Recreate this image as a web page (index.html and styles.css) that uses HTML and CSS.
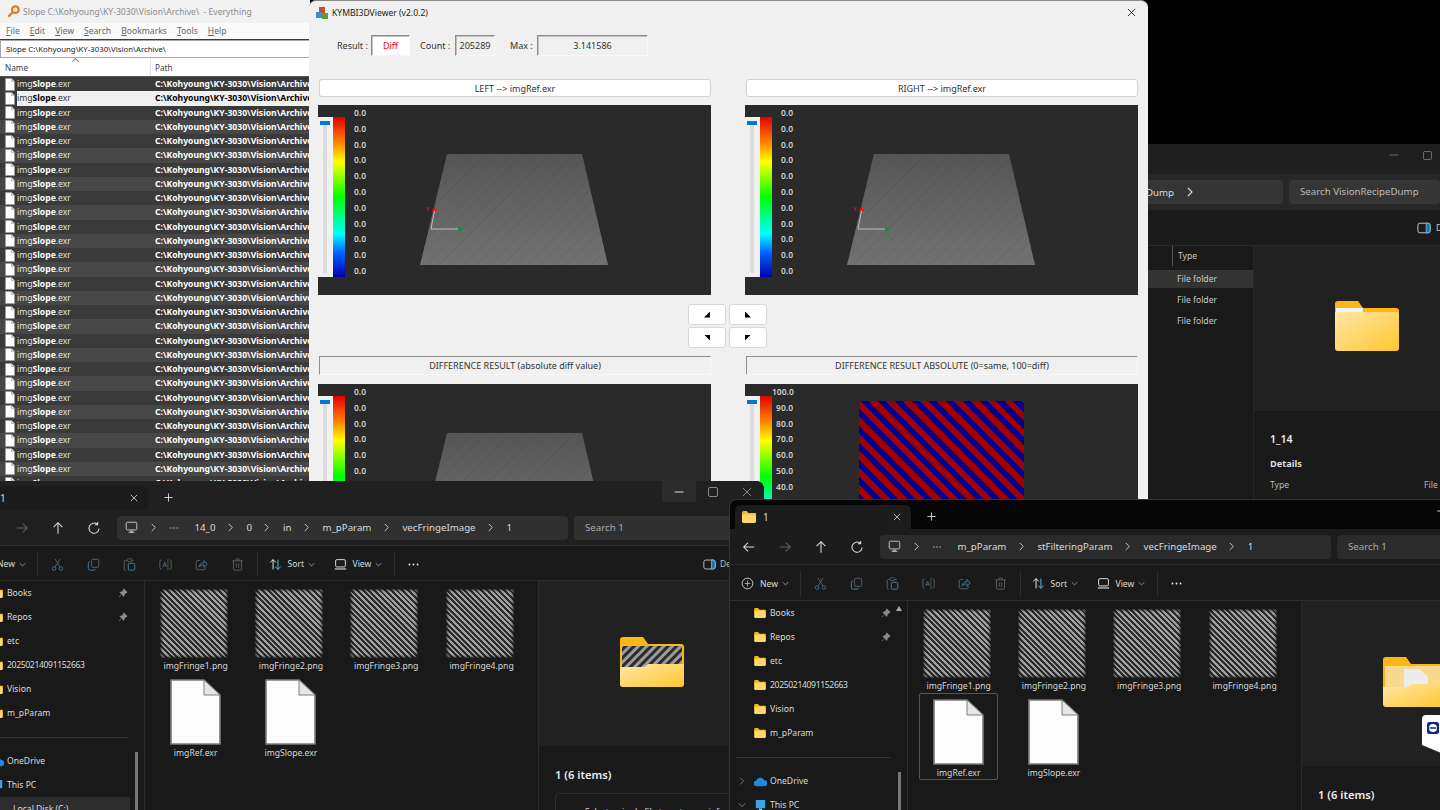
FILE: index.html
```html
<!DOCTYPE html>
<html lang="en">
<head>
    <meta charset="UTF-8">
    <meta name="viewport" content="width=device-width, initial-scale=1.0">
    <title>Desktop</title>
    <link rel="stylesheet" href="styles.css">
</head>
<body>
    <!-- shared icons -->
    <svg class="defs" aria-hidden="true">
        <defs>
            <linearGradient id="folderFront" x1="0" y1="0" x2="1" y2="1">
                <stop offset="0" stop-color="#ffe7a6"/>
                <stop offset="1" stop-color="#ffc62e"/>
            </linearGradient>
            <linearGradient id="planeFill" x1="0" y1="0" x2="0" y2="1">
                <stop offset="0" stop-color="#565656"/>
                <stop offset="1" stop-color="#727272"/>
            </linearGradient>
            <pattern id="fringe" width="6" height="6" patternUnits="userSpaceOnUse" patternTransform="rotate(45)">
                <rect width="6" height="6" fill="#2c2c2c"/>
                <rect width="3" height="6" fill="#9c9c9c"/>
            </pattern>
            <pattern id="planeLines" width="9" height="9" patternUnits="userSpaceOnUse" patternTransform="rotate(45)">
                <rect width="1" height="9" fill="#000" fill-opacity=".06"/>
            </pattern>
            <symbol id="i-back" viewBox="0 0 16 16"><path d="M14 8H2.5M7 3 2 8l5 5" fill="none" stroke="currentColor" stroke-width="1.2"/></symbol>
            <symbol id="i-forward" viewBox="0 0 16 16"><path d="M2 8h11.5M9 3l5 5-5 5" fill="none" stroke="currentColor" stroke-width="1.2"/></symbol>
            <symbol id="i-up" viewBox="0 0 16 16"><path d="M8 14.5V2.5M3 7l5-5 5 5" fill="none" stroke="currentColor" stroke-width="1.2"/></symbol>
            <symbol id="i-refresh" viewBox="0 0 16 16"><path d="M13.8 8.5a5.8 5.8 0 1 1-1.9-4.6M12.2 1v3.2H9" fill="none" stroke="currentColor" stroke-width="1.2"/></symbol>
            <symbol id="i-pc" viewBox="0 0 16 16"><rect x="1.5" y="1.5" width="13" height="9.5" rx="1.5" fill="none" stroke="currentColor" stroke-width="1.2"/><path d="M4.5 14h7M6 12.6h4" fill="none" stroke="currentColor" stroke-width="1.2"/></symbol>
            <symbol id="i-chev" viewBox="0 0 10 10"><path d="M3 1l4 4-4 4" fill="none" stroke="currentColor" stroke-width="1.1"/></symbol>
            <symbol id="i-chevdown" viewBox="0 0 10 10"><path d="M1 3l4 4 4-4" fill="none" stroke="currentColor" stroke-width="1.1"/></symbol>
            <symbol id="i-more" viewBox="0 0 16 16"><circle cx="3" cy="8" r="1.1" fill="currentColor"/><circle cx="8" cy="8" r="1.1" fill="currentColor"/><circle cx="13" cy="8" r="1.1" fill="currentColor"/></symbol>
            <symbol id="i-close" viewBox="0 0 10 10"><path d="M1 1l8 8M9 1L1 9" fill="none" stroke="currentColor" stroke-width="1"/></symbol>
            <symbol id="i-plus" viewBox="0 0 10 10"><path d="M5 .5v9M.5 5h9" fill="none" stroke="currentColor" stroke-width="1"/></symbol>
            <symbol id="i-min" viewBox="0 0 10 10"><path d="M.5 5h9" fill="none" stroke="currentColor" stroke-width="1"/></symbol>
            <symbol id="i-max" viewBox="0 0 10 10"><rect x=".5" y=".5" width="9" height="9" rx="1.5" fill="none" stroke="currentColor"/></symbol>
            <symbol id="i-new" viewBox="0 0 16 16"><circle cx="8" cy="8" r="6.6" fill="none" stroke="currentColor" stroke-width="1.1"/><path d="M8 4.5v7M4.5 8h7" stroke="#60c8f0" stroke-width="1.1"/></symbol>
            <symbol id="i-cut" viewBox="0 0 16 16"><circle cx="3.8" cy="13" r="2.2" fill="none" stroke="#3f7f9f"/><circle cx="12.2" cy="13" r="2.2" fill="none" stroke="#3f7f9f"/><path d="M5 11 11.2 1M11 11 4.8 1" fill="none" stroke="#6a6a6a"/></symbol>
            <symbol id="i-copy" viewBox="0 0 16 16"><rect x="5.5" y="1.5" width="9" height="10" rx="2" fill="none" stroke="#5d5d5d" stroke-width="1.2"/><path d="M3.8 4.6A2.4 2.4 0 0 0 1.6 7v5.6a2.4 2.4 0 0 0 2.4 2.4h4.4a2.4 2.4 0 0 0 2.2-1.6" fill="none" stroke="#3f7f9f" stroke-width="1.2"/></symbol>
            <symbol id="i-paste" viewBox="0 0 16 16"><path d="M5 3H3a1.5 1.5 0 0 0-1.5 1.5v9A1.5 1.5 0 0 0 3 15h1M11 3h2" fill="none" stroke="#5d5d5d" stroke-width="1.2"/><rect x="5" y="1" width="6" height="3.4" rx="1" fill="none" stroke="#5d5d5d"/><rect x="6.5" y="6.5" width="8" height="8.5" rx="1.5" fill="none" stroke="#3f7f9f" stroke-width="1.2"/></symbol>
            <symbol id="i-rename" viewBox="0 0 16 16"><path d="M3 2.5H2.5A1.5 1.5 0 0 0 1 4v8a1.5 1.5 0 0 0 1.5 1.5H3M13 2.5h.5A1.5 1.5 0 0 1 15 4v8a1.5 1.5 0 0 1-1.5 1.5H13" fill="none" stroke="#5d5d5d" stroke-width="1.2"/><path d="M11 .8v14.4" stroke="#5d5d5d"/><text x="7" y="11" font-size="8.5" text-anchor="middle" fill="#3f7f9f">A</text></symbol>
            <symbol id="i-share" viewBox="0 0 16 16"><path d="M6 3H3.5A2 2 0 0 0 1.5 5v7.5a2 2 0 0 0 2 2h7a2 2 0 0 0 2-2V11" fill="none" stroke="#5d5d5d" stroke-width="1.2"/><path d="M5 11c.4-3.4 2.6-5 6-5V3l4 4.4-4 4V8.6c-2.6 0-4.6.6-6 2.4z" fill="none" stroke="#3f7f9f" stroke-width="1.1"/></symbol>
            <symbol id="i-delete" viewBox="0 0 16 16"><path d="M1.5 3.5h13M6 3.5V2a1 1 0 0 1 1-1h2a1 1 0 0 1 1 1v1.5M3 3.5v10a1.5 1.5 0 0 0 1.5 1.5h7a1.5 1.5 0 0 0 1.5-1.5v-10M6.5 6.5v5.5M9.5 6.5v5.5" fill="none" stroke="#5d5d5d" stroke-width="1.2"/></symbol>
            <symbol id="i-sort" viewBox="0 0 16 16"><path d="M5 14V2M1.5 5.5 5 2l3.5 3.5" fill="none" stroke="#e8e8e8" stroke-width="1.2"/><path d="M11 2v12M7.5 10.5 11 14l3.5-3.5" fill="none" stroke="#60b8e8" stroke-width="1.2"/></symbol>
            <symbol id="i-view" viewBox="0 0 16 16"><rect x="2" y="2" width="12" height="9" rx="1.5" fill="none" stroke="currentColor" stroke-width="1.2"/><path d="M1 13.5h14" stroke="currentColor" stroke-width="1.4"/></symbol>
            <symbol id="i-pane" viewBox="0 0 16 16"><rect x="1" y="2.5" width="14" height="11" rx="2.5" fill="none" stroke="#c8c8c8" stroke-width="1.1"/><path d="M10.5 2.5h2a2.5 2.5 0 0 1 2.5 2.5v6a2.5 2.5 0 0 1-2.5 2.5h-2z" fill="#2b6f96" stroke="#60c8f0" stroke-width="1"/></symbol>
            <symbol id="i-pin" viewBox="0 0 12 12"><path d="M7 1l4 4-1.4.6-2.2 2.6-.3 2L2 5.2l2-.4 2.4-2.2zM4 8l-3 3" fill="#8c8c8c" stroke="#8c8c8c" stroke-width=".8"/></symbol>
            <symbol id="i-folder" viewBox="0 0 14 12"><path d="M0 1.5A1.5 1.5 0 0 1 1.5 0h3.2L6.4 2H14v2H0z" fill="#f5b81f"/><path d="M0 3.4h12.6A1.4 1.4 0 0 1 14 4.8v5.8a1.4 1.4 0 0 1-1.4 1.4H1.4A1.4 1.4 0 0 1 0 10.6z" fill="#ffd867"/></symbol>
            <symbol id="i-cloud" viewBox="0 0 14 10"><path d="M3 10A3 3 0 0 1 2.6 4 4.4 4.4 0 0 1 10.8 3.4 3.3 3.3 0 0 1 11 10z" fill="#1f8be0"/></symbol>
            <symbol id="i-screen" viewBox="0 0 14 14"><rect x="1" y="0" width="12" height="10.5" rx="1" fill="#3aa4e0"/><rect x="5" y="11" width="4" height="2.4" fill="#9ad4f0"/></symbol>
            <symbol id="i-file" viewBox="0 0 10 13"><path d="M.5.5h6l3 3v9H.5z" fill="#fff" stroke="#9a9a9a" stroke-width=".6"/><path d="M6.5.5v3h3" fill="#ddd" stroke="#9a9a9a" stroke-width=".6"/></symbol>
            <symbol id="i-doc" viewBox="0 0 51 66"><path d="M1 1h33l16 15v49H1z" fill="#fdfdfd" stroke="#7c7c7c" stroke-width="1.6"/><path d="M34 1v15h16z" fill="#e6e6e6" stroke="#7c7c7c" stroke-width="1"/></symbol>
            <symbol id="i-folderclosed" viewBox="0 0 64 50"><path d="M0 3a3 3 0 0 1 3-3h20l5 7h33a3 3 0 0 1 3 3v8H0z" fill="#fcb715"/><rect x="1" y="7" width="27" height="4" fill="#f2f2f2"/><path d="M0 11h61a3 3 0 0 1 3 3v33a3 3 0 0 1-3 3H3a3 3 0 0 1-3-3z" fill="url(#folderFront)"/></symbol>
            <symbol id="i-folderstripes" viewBox="0 0 64 50"><path d="M0 3a3 3 0 0 1 3-3h20l5 7h33a3 3 0 0 1 3 3v37H0z" fill="#fcb715"/><rect x="2" y="9" width="60" height="24" fill="url(#fringe)"/><path d="M0 30h24l4-3h36v20a3 3 0 0 1-3 3H3a3 3 0 0 1-3-3z" fill="url(#folderFront)"/></symbol>
            <symbol id="i-folderpaper" viewBox="0 0 64 50"><path d="M0 3a3 3 0 0 1 3-3h20l5 7h33a3 3 0 0 1 3 3v37H0z" fill="#fcb715"/><rect x="2" y="9" width="60" height="24" fill="#f8d98f"/><path d="M21 12h15l9 8v14H21z" fill="#ececec"/><path d="M0 30h24l4-3h36v20a3 3 0 0 1-3 3H3a3 3 0 0 1-3-3z" fill="url(#folderFront)"/></symbol>
            <symbol id="i-scene" viewBox="0 0 393 190">
                <polygon points="129,49 264,49 290,160 102,160" fill="url(#planeFill)"/>
                <polygon points="129,49 264,49 290,160 102,160" fill="url(#planeLines)"/>
                <path d="M117 103 113 124H142" fill="none" stroke="#bdbdbd" stroke-width="1"/>
                <path d="M114 106 119 106 117 101z" fill="#ff1010"/>
                <path d="M140 121.5 146 124 140 126.5z" fill="#109040"/>
                <text x="108" y="106" font-size="6" fill="#ff1010">Y</text>
                <text x="141" y="132" font-size="6" fill="#109040">X</text>
            </symbol>
        </defs>
    </svg>

    <!-- Everything search window -->
    <div class="everything">
        <div class="ev-title">
            <svg class="ev-logo" viewBox="0 0 14 14"><circle cx="9" cy="5" r="3.6" fill="none" stroke="#f0780a" stroke-width="2.4"/><path d="M6.4 7.6 1.5 12.5" stroke="#f0780a" stroke-width="2.4"/></svg>
            <span>Slope C:\Kohyoung\KY-3030\Vision\Archive\&nbsp; - Everything</span>
        </div>
        <div class="ev-menu">
            <span><u>F</u>ile</span><span><u>E</u>dit</span><span><u>V</u>iew</span><span><u>S</u>earch</span><span><u>B</u>ookmarks</span><span><u>T</u>ools</span><span><u>H</u>elp</span>
        </div>
        <div class="ev-search">Slope C:\Kohyoung\KY-3030\Vision\Archive\</div>
        <div class="ev-head">
            <span class="ev-col-name">Name<i class="ev-caret"></i></span>
            <span class="ev-col-path">Path</span>
        </div>
        <div class="ev-rows">
            <div class="ev-row"><svg><use href="#i-file"/></svg><span class="nm">img<b>Slope</b>.exr</span><b class="pt">C:\Kohyoung\KY-3030\Vision\Archive\</b></div>
            <div class="ev-row selected"><svg><use href="#i-file"/></svg><span class="nm">img<b>Slope</b>.exr</span><b class="pt">C:\Kohyoung\KY-3030\Vision\Archive\</b></div>
            <div class="ev-row"><svg><use href="#i-file"/></svg><span class="nm">img<b>Slope</b>.exr</span><b class="pt">C:\Kohyoung\KY-3030\Vision\Archive\</b></div>
            <div class="ev-row"><svg><use href="#i-file"/></svg><span class="nm">img<b>Slope</b>.exr</span><b class="pt">C:\Kohyoung\KY-3030\Vision\Archive\</b></div>
            <div class="ev-row"><svg><use href="#i-file"/></svg><span class="nm">img<b>Slope</b>.exr</span><b class="pt">C:\Kohyoung\KY-3030\Vision\Archive\</b></div>
            <div class="ev-row"><svg><use href="#i-file"/></svg><span class="nm">img<b>Slope</b>.exr</span><b class="pt">C:\Kohyoung\KY-3030\Vision\Archive\</b></div>
            <div class="ev-row"><svg><use href="#i-file"/></svg><span class="nm">img<b>Slope</b>.exr</span><b class="pt">C:\Kohyoung\KY-3030\Vision\Archive\</b></div>
            <div class="ev-row"><svg><use href="#i-file"/></svg><span class="nm">img<b>Slope</b>.exr</span><b class="pt">C:\Kohyoung\KY-3030\Vision\Archive\</b></div>
            <div class="ev-row"><svg><use href="#i-file"/></svg><span class="nm">img<b>Slope</b>.exr</span><b class="pt">C:\Kohyoung\KY-3030\Vision\Archive\</b></div>
            <div class="ev-row"><svg><use href="#i-file"/></svg><span class="nm">img<b>Slope</b>.exr</span><b class="pt">C:\Kohyoung\KY-3030\Vision\Archive\</b></div>
            <div class="ev-row"><svg><use href="#i-file"/></svg><span class="nm">img<b>Slope</b>.exr</span><b class="pt">C:\Kohyoung\KY-3030\Vision\Archive\</b></div>
            <div class="ev-row"><svg><use href="#i-file"/></svg><span class="nm">img<b>Slope</b>.exr</span><b class="pt">C:\Kohyoung\KY-3030\Vision\Archive\</b></div>
            <div class="ev-row"><svg><use href="#i-file"/></svg><span class="nm">img<b>Slope</b>.exr</span><b class="pt">C:\Kohyoung\KY-3030\Vision\Archive\</b></div>
            <div class="ev-row"><svg><use href="#i-file"/></svg><span class="nm">img<b>Slope</b>.exr</span><b class="pt">C:\Kohyoung\KY-3030\Vision\Archive\</b></div>
            <div class="ev-row"><svg><use href="#i-file"/></svg><span class="nm">img<b>Slope</b>.exr</span><b class="pt">C:\Kohyoung\KY-3030\Vision\Archive\</b></div>
            <div class="ev-row"><svg><use href="#i-file"/></svg><span class="nm">img<b>Slope</b>.exr</span><b class="pt">C:\Kohyoung\KY-3030\Vision\Archive\</b></div>
            <div class="ev-row"><svg><use href="#i-file"/></svg><span class="nm">img<b>Slope</b>.exr</span><b class="pt">C:\Kohyoung\KY-3030\Vision\Archive\</b></div>
            <div class="ev-row"><svg><use href="#i-file"/></svg><span class="nm">img<b>Slope</b>.exr</span><b class="pt">C:\Kohyoung\KY-3030\Vision\Archive\</b></div>
            <div class="ev-row"><svg><use href="#i-file"/></svg><span class="nm">img<b>Slope</b>.exr</span><b class="pt">C:\Kohyoung\KY-3030\Vision\Archive\</b></div>
            <div class="ev-row"><svg><use href="#i-file"/></svg><span class="nm">img<b>Slope</b>.exr</span><b class="pt">C:\Kohyoung\KY-3030\Vision\Archive\</b></div>
            <div class="ev-row"><svg><use href="#i-file"/></svg><span class="nm">img<b>Slope</b>.exr</span><b class="pt">C:\Kohyoung\KY-3030\Vision\Archive\</b></div>
            <div class="ev-row"><svg><use href="#i-file"/></svg><span class="nm">img<b>Slope</b>.exr</span><b class="pt">C:\Kohyoung\KY-3030\Vision\Archive\</b></div>
            <div class="ev-row"><svg><use href="#i-file"/></svg><span class="nm">img<b>Slope</b>.exr</span><b class="pt">C:\Kohyoung\KY-3030\Vision\Archive\</b></div>
            <div class="ev-row"><svg><use href="#i-file"/></svg><span class="nm">img<b>Slope</b>.exr</span><b class="pt">C:\Kohyoung\KY-3030\Vision\Archive\</b></div>
            <div class="ev-row"><svg><use href="#i-file"/></svg><span class="nm">img<b>Slope</b>.exr</span><b class="pt">C:\Kohyoung\KY-3030\Vision\Archive\</b></div>
            <div class="ev-row"><svg><use href="#i-file"/></svg><span class="nm">img<b>Slope</b>.exr</span><b class="pt">C:\Kohyoung\KY-3030\Vision\Archive\</b></div>
            <div class="ev-row"><svg><use href="#i-file"/></svg><span class="nm">img<b>Slope</b>.exr</span><b class="pt">C:\Kohyoung\KY-3030\Vision\Archive\</b></div>
            <div class="ev-row"><svg><use href="#i-file"/></svg><span class="nm">img<b>Slope</b>.exr</span><b class="pt">C:\Kohyoung\KY-3030\Vision\Archive\</b></div>
            <div class="ev-row"><svg><use href="#i-file"/></svg><span class="nm">img<b>Slope</b>.exr</span><b class="pt">C:\Kohyoung\KY-3030\Vision\Archive\</b></div>
        </div>
    </div>

    <!-- explorer behind the viewer -->
    <div class="back-explorer">
        <div class="be-top">
            <svg class="be-min"><use href="#i-min"/></svg>
            <svg class="be-max"><use href="#i-max"/></svg>
        </div>
        <div class="be-address">
            <div class="be-crumb"><span>Dump</span><svg><use href="#i-chev"/></svg></div>
            <div class="be-search">Search VisionRecipeDump</div>
        </div>
        <div class="be-tools"><svg><use href="#i-pane"/></svg><span>Details</span></div>
        <div class="be-body">
            <div class="be-list">
                <div class="be-type"><span>Type</span></div>
                <div class="be-item active">File folder</div>
                <div class="be-item">File folder</div>
                <div class="be-item">File folder</div>
            </div>
            <div class="be-side">
                <div class="be-preview"><svg><use href="#i-folderclosed"/></svg></div>
                <div class="be-details">
                    <div class="be-name">1_14</div>
                    <div class="be-label">Details</div>
                    <div class="be-prop"><span>Type</span><span>File folder</span></div>
                </div>
            </div>
        </div>
    </div>

    <!-- 3D viewer -->
    <div class="viewer">
        <div class="vw-title">
            <svg class="vw-logo" viewBox="0 0 12 12"><rect x="3" y="0" width="6" height="6" fill="#d04a3a"/><rect x="0" y="5" width="6" height="6" fill="#3f8fb8"/><rect x="6" y="6" width="6" height="6" fill="#5a9a4a"/></svg>
            <span>KYMBI3DViewer (v2.0.2)</span>
            <svg class="vw-close"><use href="#i-close"/></svg>
        </div>
        <div class="vw-stats">
            <span class="st-label st-result">Result :</span><span class="st-box st-diff">Diff</span>
            <span class="st-label st-count">Count :</span><span class="st-box st-num">205289</span>
            <span class="st-label st-max">Max :</span><span class="st-box st-wide">3.141586</span>
        </div>
        <div class="vw-panels">
            <div class="panel">
                <div class="caption button">LEFT --&gt; imgRef.exr</div>
                <div class="view">
                    <div class="slider"><i></i></div><div class="colorbar"></div>
                    <div class="scale"><span>0.0</span><span>0.0</span><span>0.0</span><span>0.0</span><span>0.0</span><span>0.0</span><span>0.0</span><span>0.0</span><span>0.0</span><span>0.0</span><span>0.0</span></div>
                    <svg class="scene"><use href="#i-scene"/></svg>
                </div>
            </div>
            <div class="panel">
                <div class="caption button">RIGHT --&gt; imgRef.exr</div>
                <div class="view">
                    <div class="slider"><i></i></div><div class="colorbar"></div>
                    <div class="scale"><span>0.0</span><span>0.0</span><span>0.0</span><span>0.0</span><span>0.0</span><span>0.0</span><span>0.0</span><span>0.0</span><span>0.0</span><span>0.0</span><span>0.0</span></div>
                    <svg class="scene"><use href="#i-scene"/></svg>
                </div>
            </div>
        </div>
        <div class="vw-arrows">
            <button class="arrow"><i class="tri tri-a"></i></button>
            <button class="arrow"><i class="tri tri-b"></i></button>
            <button class="arrow"><i class="tri tri-c"></i></button>
            <button class="arrow"><i class="tri tri-d"></i></button>
        </div>
        <div class="vw-panels">
            <div class="panel">
                <div class="caption sunken">DIFFERENCE RESULT (absolute diff value)</div>
                <div class="view">
                    <div class="slider"><i></i></div><div class="colorbar"></div>
                    <div class="scale"><span>0.0</span><span>0.0</span><span>0.0</span><span>0.0</span><span>0.0</span><span>0.0</span><span>0.0</span><span>0.0</span><span>0.0</span><span>0.0</span><span>0.0</span></div>
                    <svg class="scene"><use href="#i-scene"/></svg>
                </div>
            </div>
            <div class="panel">
                <div class="caption sunken">DIFFERENCE RESULT ABSOLUTE (0=same, 100=diff)</div>
                <div class="view">
                    <div class="slider"><i></i></div><div class="colorbar"></div>
                    <div class="scale"><span>100.0</span><span>90.0</span><span>80.0</span><span>70.0</span><span>60.0</span><span>50.0</span><span>40.0</span><span>30.0</span><span>20.0</span><span>10.0</span><span>0.0</span></div>
                    <div class="diff-map"></div>
                </div>
            </div>
        </div>
    </div>

    <!-- explorer, lower left -->
    <div class="explorer win-left">
        <div class="ex-tabs">
            <div class="ex-tab"><svg class="ic-folder"><use href="#i-folder"/></svg><span>1</span><svg class="tab-x"><use href="#i-close"/></svg></div>
            <svg class="tab-plus"><use href="#i-plus"/></svg>
            <div class="ex-controls">
                <span class="ctl hover"><svg><use href="#i-min"/></svg></span>
                <span class="ctl"><svg><use href="#i-max"/></svg></span>
                <span class="ctl"><svg><use href="#i-close"/></svg></span>
            </div>
        </div>
        <div class="ex-address">
            <svg class="nav"><use href="#i-back"/></svg>
            <svg class="nav dim"><use href="#i-forward"/></svg>
            <svg class="nav"><use href="#i-up"/></svg>
            <svg class="nav"><use href="#i-refresh"/></svg>
            <div class="crumbs">
                <svg class="cr-pc"><use href="#i-pc"/></svg><svg class="cr-sep"><use href="#i-chev"/></svg>
                <svg class="cr-more"><use href="#i-more"/></svg>
                <span>14_0</span><svg class="cr-sep"><use href="#i-chev"/></svg>
                <span>0</span><svg class="cr-sep"><use href="#i-chev"/></svg>
                <span>in</span><svg class="cr-sep"><use href="#i-chev"/></svg>
                <span>m_pParam</span><svg class="cr-sep"><use href="#i-chev"/></svg>
                <span>vecFringeImage</span><svg class="cr-sep"><use href="#i-chev"/></svg>
                <span>1</span>
            </div>
            <div class="ex-search">Search 1</div>
        </div>
        <div class="ex-tools">
            <span class="tool tool-new"><svg><use href="#i-new"/></svg>New<svg class="caret"><use href="#i-chevdown"/></svg></span>
            <i class="tool-sep"></i>
            <svg class="tool-ic"><use href="#i-cut"/></svg>
            <svg class="tool-ic"><use href="#i-copy"/></svg>
            <svg class="tool-ic"><use href="#i-paste"/></svg>
            <svg class="tool-ic"><use href="#i-rename"/></svg>
            <svg class="tool-ic"><use href="#i-share"/></svg>
            <svg class="tool-ic"><use href="#i-delete"/></svg>
            <i class="tool-sep"></i>
            <span class="tool tool-sort"><svg><use href="#i-sort"/></svg>Sort<svg class="caret"><use href="#i-chevdown"/></svg></span>
            <span class="tool tool-view"><svg><use href="#i-view"/></svg>View<svg class="caret"><use href="#i-chevdown"/></svg></span>
            <i class="tool-sep"></i>
            <svg class="tool-more"><use href="#i-more"/></svg>
            <span class="tool tool-pane"><svg><use href="#i-pane"/></svg>Details</span>
        </div>
        <div class="ex-body">
            <div class="ex-nav">
                <div class="nv"><svg class="ic-folder"><use href="#i-folder"/></svg><span>Books</span><svg class="pin"><use href="#i-pin"/></svg></div>
                <div class="nv"><svg class="ic-folder"><use href="#i-folder"/></svg><span>Repos</span><svg class="pin"><use href="#i-pin"/></svg></div>
                <div class="nv"><svg class="ic-folder"><use href="#i-folder"/></svg><span>etc</span></div>
                <div class="nv"><svg class="ic-folder"><use href="#i-folder"/></svg><span class="nv-num">20250214091152663</span></div>
                <div class="nv"><svg class="ic-folder"><use href="#i-folder"/></svg><span>Vision</span></div>
                <div class="nv"><svg class="ic-folder"><use href="#i-folder"/></svg><span>m_pParam</span></div>
                <div class="nv-rule"></div>
                <div class="nv"><svg class="nv-chev"><use href="#i-chev"/></svg><svg class="ic-cloud"><use href="#i-cloud"/></svg><span>OneDrive</span></div>
                <div class="nv"><svg class="nv-chev"><use href="#i-chevdown"/></svg><svg class="ic-screen"><use href="#i-screen"/></svg><span>This PC</span></div>
                <div class="nv sub current"><span>Local Disk (C:)</span></div>
                <i class="nv-thumb"></i>
            </div>
            <div class="ex-files">
                <div class="file"><div class="thumb"></div><span>imgFringe1.png</span></div>
                <div class="file"><div class="thumb"></div><span>imgFringe2.png</span></div>
                <div class="file"><div class="thumb"></div><span>imgFringe3.png</span></div>
                <div class="file"><div class="thumb"></div><span>imgFringe4.png</span></div>
                <div class="file"><svg class="doc"><use href="#i-doc"/></svg><span>imgRef.exr</span></div>
                <div class="file"><svg class="doc"><use href="#i-doc"/></svg><span>imgSlope.exr</span></div>
            </div>
            <div class="ex-side">
                <div class="ex-preview"><svg><use href="#i-folderstripes"/></svg></div>
                <div class="ex-details">
                    <div class="ex-count">1 (6 items)</div>
                    <div class="ex-hint">Select a single file to get more information</div>
                </div>
            </div>
        </div>
    </div>

    <!-- explorer, lower right -->
    <div class="explorer win-right">
        <div class="ex-tabs">
            <div class="ex-tab"><svg class="ic-folder"><use href="#i-folder"/></svg><span>1</span><svg class="tab-x"><use href="#i-close"/></svg></div>
            <svg class="tab-plus"><use href="#i-plus"/></svg>
            <div class="ex-controls">
                <span class="ctl"><svg><use href="#i-min"/></svg></span>
                <span class="ctl"><svg><use href="#i-max"/></svg></span>
                <span class="ctl"><svg><use href="#i-close"/></svg></span>
            </div>
        </div>
        <div class="ex-address">
            <svg class="nav"><use href="#i-back"/></svg>
            <svg class="nav dim"><use href="#i-forward"/></svg>
            <svg class="nav"><use href="#i-up"/></svg>
            <svg class="nav"><use href="#i-refresh"/></svg>
            <div class="crumbs">
                <svg class="cr-pc"><use href="#i-pc"/></svg><svg class="cr-sep"><use href="#i-chev"/></svg>
                <svg class="cr-more"><use href="#i-more"/></svg>
                <span>m_pParam</span><svg class="cr-sep"><use href="#i-chev"/></svg>
                <span>stFilteringParam</span><svg class="cr-sep"><use href="#i-chev"/></svg>
                <span>vecFringeImage</span><svg class="cr-sep"><use href="#i-chev"/></svg>
                <span>1</span>
            </div>
            <div class="ex-search">Search 1</div>
        </div>
        <div class="ex-tools">
            <span class="tool tool-new"><svg><use href="#i-new"/></svg>New<svg class="caret"><use href="#i-chevdown"/></svg></span>
            <i class="tool-sep"></i>
            <svg class="tool-ic"><use href="#i-cut"/></svg>
            <svg class="tool-ic"><use href="#i-copy"/></svg>
            <svg class="tool-ic"><use href="#i-paste"/></svg>
            <svg class="tool-ic"><use href="#i-rename"/></svg>
            <svg class="tool-ic"><use href="#i-share"/></svg>
            <svg class="tool-ic"><use href="#i-delete"/></svg>
            <i class="tool-sep"></i>
            <span class="tool tool-sort"><svg><use href="#i-sort"/></svg>Sort<svg class="caret"><use href="#i-chevdown"/></svg></span>
            <span class="tool tool-view"><svg><use href="#i-view"/></svg>View<svg class="caret"><use href="#i-chevdown"/></svg></span>
            <i class="tool-sep"></i>
            <svg class="tool-more"><use href="#i-more"/></svg>
        </div>
        <div class="ex-body">
            <div class="ex-nav">
                <div class="nv"><svg class="ic-folder"><use href="#i-folder"/></svg><span>Books</span><svg class="pin"><use href="#i-pin"/></svg></div>
                <div class="nv"><svg class="ic-folder"><use href="#i-folder"/></svg><span>Repos</span><svg class="pin"><use href="#i-pin"/></svg></div>
                <div class="nv"><svg class="ic-folder"><use href="#i-folder"/></svg><span>etc</span></div>
                <div class="nv"><svg class="ic-folder"><use href="#i-folder"/></svg><span class="nv-num">20250214091152663</span></div>
                <div class="nv"><svg class="ic-folder"><use href="#i-folder"/></svg><span>Vision</span></div>
                <div class="nv"><svg class="ic-folder"><use href="#i-folder"/></svg><span>m_pParam</span></div>
                <div class="nv-rule"></div>
                <div class="nv"><svg class="nv-chev"><use href="#i-chev"/></svg><svg class="ic-cloud"><use href="#i-cloud"/></svg><span>OneDrive</span></div>
                <div class="nv"><svg class="nv-chev"><use href="#i-chevdown"/></svg><svg class="ic-screen"><use href="#i-screen"/></svg><span>This PC</span></div>
                <i class="nv-up"></i>
                <i class="nv-thumb"></i>
            </div>
            <div class="ex-files">
                <div class="file"><div class="thumb"></div><span>imgFringe1.png</span></div>
                <div class="file"><div class="thumb"></div><span>imgFringe2.png</span></div>
                <div class="file"><div class="thumb"></div><span>imgFringe3.png</span></div>
                <div class="file"><div class="thumb"></div><span>imgFringe4.png</span></div>
                <div class="file focused"><svg class="doc"><use href="#i-doc"/></svg><span>imgRef.exr</span></div>
                <div class="file"><svg class="doc"><use href="#i-doc"/></svg><span>imgSlope.exr</span></div>
            </div>
            <div class="ex-side">
                <div class="ex-preview"><svg><use href="#i-folderpaper"/></svg></div>
                <div class="ex-details">
                    <div class="ex-count">1 (6 items)</div>
                </div>
            </div>
        </div>
    </div>

    <!-- remote control panel docked on the screen edge -->
    <div class="remote-tab"><svg viewBox="0 0 12 12"><rect width="12" height="12" rx="2.5" fill="#0e2a7a"/><circle cx="6" cy="6" r="4" fill="#fff"/><path d="M2.8 6h6.4" stroke="#0e2a7a" stroke-width="1.4"/></svg></div>
</body>
</html>
```

FILE: styles.css
```css
* {
    box-sizing: border-box;
}
html, body {
    height: 100%;
}
body {
    margin: 0;
    position: relative;
    height: 810px;
    overflow: hidden;
    background-color: #000;
    font-family: "Noto Sans", "Open Sans", sans-serif;
    font-size: 8.6px;
}
svg {
    display: block;
    flex: none;
}
.defs {
    position: absolute;
    width: 0;
    height: 0;
}

/* Everything window */
.everything {
    position: absolute;
    left: 0;
    top: 0;
    width: 310px;
    height: 500px;
    background-color: #3c3c3c;
    overflow: hidden;
}
.ev-title {
    display: flex;
    align-items: center;
    gap: 3px;
    height: 23px;
    padding-left: 7px;
    background-color: #f1f1f1;
    color: #8c8c8c;
    white-space: nowrap;
}
.ev-logo {
    width: 13px;
    height: 13px;
}
.ev-menu {
    display: flex;
    gap: 10px;
    height: 16px;
    padding-left: 6px;
    align-items: center;
    background-color: #fafafa;
    color: #666;
}
.ev-search {
    height: 18px;
    margin: 1px 0 0;
    padding-left: 5px;
    line-height: 16px;
    border: 1px solid #a8a8a8;
    background-color: #fff;
    color: #222;
    font-size: 7.8px;
    white-space: nowrap;
}
.ev-head {
    display: flex;
    height: 19px;
    background-color: #fff;
    color: #444;
    font-size: 8.2px;
    line-height: 17px;
    border-bottom: 1px solid #555;
}
.ev-col-name {
    position: relative;
    width: 151px;
    padding: 1px 0 0 5px;
    border-right: 1px solid #e2e2e2;
}
.ev-caret {
    position: absolute;
    left: 73px;
    top: 1px;
    width: 5px;
    height: 5px;
    border-top: 1px solid #888;
    border-left: 1px solid #888;
    transform: rotate(45deg);
}
.ev-col-path {
    padding: 1px 0 0 4px;
}
.ev-row {
    display: flex;
    align-items: center;
    height: 14.25px;
    background-color: #3a3a3a;
    color: #e2e2e2;
    white-space: nowrap;
    overflow: hidden;
}
.ev-row:nth-child(even) {
    background-color: #474747;
}
.ev-row svg {
    width: 10px;
    height: 13px;
    margin: 0 2px 0 5px;
}
.ev-row b {
    color: #fff;
}
.ev-row .nm {
    flex: none;
    width: 134px;
    height: 100%;
    line-height: 14px;
}
.ev-row .pt {
    margin-left: 4px;
}
.ev-row.selected {
    background-color: #3a3a3a;
}
.ev-row.selected .nm {
    background-color: #f0f0f0;
    color: #333;
}
.ev-row.selected .nm b,
.ev-row.selected .pt {
    color: #000;
}
.ev-row.selected .pt {
    margin-left: 0;
    padding-left: 4px;
    flex: 1;
    height: 100%;
    line-height: 14px;
    background-color: #f0f0f0;
}

/* explorer behind the viewer */
.back-explorer {
    position: absolute;
    left: 1100px;
    top: 144px;
    width: 340px;
    height: 380px;
    display: flex;
    flex-direction: column;
    color: #c8c8c8;
    background-color: #191919;
}
.be-top {
    display: flex;
    align-items: center;
    justify-content: flex-end;
    gap: 24px;
    height: 30px;
    padding: 0 8px 8px 0;
    background-color: #1f1f1f;
}
.be-min {
    width: 10px;
    height: 10px;
    color: #666;
}
.be-max {
    width: 9px;
    height: 9px;
    color: #777;
}
.be-address {
    display: flex;
    gap: 6px;
    height: 36px;
    padding: 6px 0;
    background-color: #272727;
    font-size: 9.7px;
}
.be-crumb {
    display: flex;
    align-items: center;
    gap: 11px;
    width: 183px;
    padding-left: 46px;
    border-radius: 4px;
    background-color: #353535;
    color: #ddd;
}
.be-crumb svg {
    width: 10px;
    height: 10px;
}
.be-search {
    flex: 1;
    padding-left: 11px;
    line-height: 24px;
    border-radius: 4px;
    background-color: #353535;
    color: #bbb;
}
.be-tools {
    display: flex;
    align-items: center;
    gap: 5px;
    height: 36px;
    padding-left: 317px;
    background-color: #1b1b1b;
    border-bottom: 1px solid #2a2a2a;
}
.be-tools svg {
    width: 14px;
    height: 14px;
}
.be-body {
    display: flex;
    flex: 1;
}
.be-list {
    flex: none;
    width: 154px;
    border-right: 1px solid #262626;
}
.be-type {
    height: 20px;
    margin-left: 72px;
    padding-left: 5px;
    line-height: 20px;
    border-left: 1px solid #555;
}
.be-item {
    height: 18px;
    margin-top: 3px;
    padding-left: 77px;
    line-height: 18px;
}
.be-item.active {
    margin-top: 4px;
    background-color: #333;
}
.be-side {
    flex: 1;
    min-width: 0;
    display: flex;
    flex-direction: column;
}
.be-preview {
    display: flex;
    flex: none;
    align-items: center;
    justify-content: center;
    height: 165px;
    background-color: #212121;
}
.be-preview svg {
    width: 64px;
    height: 50px;
    margin: 0 0 5px 39px;
}
.be-details {
    flex: 1;
    padding: 21px 0 0 16px;
    background-color: #1a1a1a;
}
.be-name {
    font-size: 10.5px;
    font-weight: 600;
    color: #eee;
}
.be-label {
    margin-top: 11px;
    font-size: 9.2px;
    font-weight: 700;
    color: #ddd;
}
.be-prop {
    display: flex;
    margin-top: 9px;
    color: #b8b8b8;
    white-space: nowrap;
}
.be-prop span:first-child {
    flex: none;
    width: 154px;
}

/* 3D viewer */
.viewer {
    position: absolute;
    left: 309px;
    top: 0;
    width: 839px;
    height: 600px;
    padding: 0 9px;
    background-color: #f0f0f0;
    border-top: 1px solid #888;
    border-radius: 7px 7px 0 0;
    color: #333;
    font-size: 9px;
}
.vw-title {
    display: flex;
    align-items: center;
    gap: 4px;
    height: 23px;
    margin: 0 -9px;
    padding: 0 12px 0 7px;
    color: #222;
    font-size: 8.6px;
}
.vw-logo {
    width: 12px;
    height: 12px;
}
.vw-close {
    width: 9px;
    height: 9px;
    margin-left: auto;
    color: #222;
}
.vw-stats {
    display: flex;
    align-items: center;
    height: 21px;
    margin-top: 11px;
}
.st-label {
    color: #333;
}
.st-result {
    width: 34px;
    margin-left: 19px;
}
.st-count {
    width: 35px;
    margin-left: 10px;
}
.st-max {
    width: 27px;
    margin-left: 15px;
}
.st-box {
    height: 21px;
    line-height: 19px;
    text-align: center;
    border: 1px solid;
    border-color: #8e8e8e #f8f8f8 #f8f8f8 #8e8e8e;
    box-shadow: inset 1px 1px 0 #c0c0c0;
}
.st-diff {
    width: 39px;
    background-color: #fff;
    color: #ff0020;
}
.st-num {
    width: 40px;
}
.st-wide {
    width: 111px;
}
.vw-panels {
    display: grid;
    grid-template-columns: 393px 393px;
    column-gap: 34px;
    margin-top: 23px;
}
.vw-arrows + .vw-panels {
    margin-top: 8px;
}
.caption {
    height: 18px;
    margin-left: 1px;
    line-height: 17px;
    text-align: center;
    color: #333;
}
.caption.button {
    background-color: #fff;
    border: 1px solid #d4d4d4;
    border-radius: 3px;
}
.caption.sunken {
    height: 19px;
    border: 1px solid;
    border-color: #8e8e8e #f8f8f8 #f8f8f8 #8e8e8e;
}
.view {
    position: relative;
    display: flex;
    align-items: flex-start;
    height: 190px;
    margin-top: 8px;
    background-color: #2a2a2a;
    overflow: hidden;
}
.sunken + .view {
    margin-top: 9px;
}
.slider {
    position: relative;
    width: 15px;
    height: 160px;
    margin-top: 12px;
    background-color: #f0f0f0;
}
.slider::before {
    content: "";
    position: absolute;
    left: 5px;
    top: 8px;
    bottom: 4px;
    width: 4px;
    background-color: #dcdcdc;
}
.slider i {
    position: absolute;
    left: 2px;
    top: 4px;
    width: 10px;
    height: 4px;
    background-color: #0078d7;
}
.colorbar {
    width: 12px;
    height: 160px;
    margin-top: 12px;
    background: linear-gradient(#e00000, #ff7a00 15%, #ffff00 28%, #00ff00 50%, #00ffff 73%, #0060ff 85%, #0000b0);
}
.scale {
    display: flex;
    flex-direction: column;
    width: 21px;
    font-size: 8.5px;
    font-weight: 600;
    text-align: right;
    color: #d0d0d0;
}
.scale span {
    height: 15.8px;
    line-height: 16px;
}
.scene {
    position: absolute;
    left: 0;
    top: 0;
    width: 393px;
    height: 190px;
}
.diff-map {
    position: absolute;
    left: 114px;
    top: 17px;
    width: 165px;
    height: 160px;
    background: repeating-linear-gradient(45deg, #a00000 0 6px, #00008c 6px 12px);
}
.vw-arrows {
    display: grid;
    grid-template-columns: 38px 38px;
    grid-auto-rows: 21px;
    gap: 2px 3px;
    justify-content: center;
    margin: 9px 2px 0 0;
}
.arrow {
    display: flex;
    align-items: center;
    justify-content: center;
    padding: 0;
    background-color: #fff;
    border: 1px solid #d8d8d8;
    border-radius: 3px;
}
.tri {
    width: 6px;
    height: 6px;
    background-color: #000;
}
.tri-a { clip-path: polygon(100% 0, 100% 100%, 0 100%); }
.tri-b { clip-path: polygon(0 0, 100% 100%, 0 100%); }
.tri-c { clip-path: polygon(0 0, 100% 0, 100% 100%); }
.tri-d { clip-path: polygon(0 0, 100% 0, 0 100%); }

/* file explorer windows */
.explorer {
    position: absolute;
    display: flex;
    flex-direction: column;
    width: 797px;
    height: 340px;
    border-radius: 8px 8px 0 0;
    overflow: hidden;
    color: #dcdcdc;
    background-color: #191919;
}
.win-left {
    left: -33px;
    top: 481px;
    --bar: #202020;
    --tab: #1b1b1b;
    --row: #202020;
    --box: #303030;
}
.win-right {
    left: 729px;
    top: 499px;
    width: 798px;
    border-left: 1px solid #333;
    border-top: 1px solid #333;
    --bar: #060606;
    --tab: #1c1c1c;
    --row: #1c1c1c;
    --box: #2b2b2b;
}
.win-right .ex-tools {
    height: 36px;
}
.ex-tabs {
    display: flex;
    height: 29px;
    padding: 5px 0 0 5px;
    background-color: var(--bar);
}
.ex-tab {
    display: flex;
    align-items: center;
    width: 180px;
    height: 24px;
    padding: 0 10px 0 7px;
    border-radius: 6px 6px 0 0;
    background-color: var(--tab);
    font-size: 10px;
}
.ex-tab span {
    margin-left: 7px;
}
.ic-folder {
    width: 14px;
    height: 12px;
}
.tab-x {
    width: 8px;
    height: 8px;
    margin-left: auto;
}
.tab-plus {
    width: 9px;
    height: 9px;
    margin: 7px 0 0 16px;
}
.ex-controls {
    display: flex;
    margin: -5px 0 0 489px;
    align-items: flex-start;
}
.ctl {
    display: flex;
    align-items: center;
    justify-content: center;
    width: 34px;
    height: 21px;
    color: #8a8a8a;
}
.ctl svg {
    width: 10px;
    height: 10px;
}
.ctl:first-child svg {
    color: #ddd;
}
.ctl.hover {
    background-color: #2b2b2b;
}
.ex-address {
    display: flex;
    align-items: center;
    height: 36px;
    padding: 0 0 0 12px;
    background-color: var(--row);
    border-bottom: 1px solid #2c2c2c;
    font-size: 9.7px;
}
.nav {
    width: 14px;
    height: 14px;
    margin-right: 22px;
    color: #dcdcdc;
}
.nav.dim {
    color: #606060;
}
.nav:nth-of-type(4) {
    margin-right: 16px;
}
.crumbs {
    display: flex;
    align-items: center;
    width: 451px;
    height: 24px;
    padding-left: 8px;
    border-radius: 4px;
    background-color: var(--box);
    white-space: nowrap;
}
.cr-pc {
    width: 13px;
    height: 13px;
    color: #c4c4c4;
}
.cr-sep {
    width: 9px;
    height: 9px;
    margin: 0 11.5px 0 10.5px;
    color: #c4c4c4;
}
.cr-more {
    width: 10px;
    height: 10px;
    margin-right: 15.5px;
    color: #c4c4c4;
}
.ex-search {
    width: 180px;
    height: 24px;
    margin-left: 6px;
    padding-left: 11px;
    line-height: 24px;
    border-radius: 4px;
    background-color: var(--box);
    color: #aaa;
}
.ex-tools {
    display: flex;
    align-items: center;
    height: 35px;
    padding: 2px 0 0 11px;
    background-color: #1a1a1a;
    border-bottom: 1px solid #2c2c2c;
}
.tool {
    display: flex;
    flex: none;
    align-items: center;
    white-space: nowrap;
}
.tool > svg:first-child {
    width: 13px;
    height: 13px;
    margin-right: 6px;
    color: #dcdcdc;
}
.tool-new {
    width: 59px;
    color: #dcdcdc;
}
.caret {
    width: 7px;
    height: 7px;
    margin-left: 4px;
    color: #aaa;
}
.tool-sep {
    flex: none;
    width: 1px;
    height: 24px;
    background-color: #2e2e2e;
}
.tool-ic {
    width: 13px;
    height: 13px;
    margin-left: 23px;
}
.tool-sep + .tool-ic {
    margin-left: 12.5px;
}
.tool-ic + .tool-sep {
    margin-left: 13px;
}
.tool-sort {
    width: 65px;
    margin-left: 11px;
}
.tool-view {
    width: 60px;
}
.tool-more {
    width: 13px;
    height: 13px;
    margin-left: 12.5px;
    color: #eee;
}
.tool-pane {
    margin-left: 283px;
    color: #bbb;
}
.tool-pane > svg:first-child {
    margin-right: 4px;
}
.ex-body {
    display: flex;
    flex: 1;
    min-height: 0;
}
.ex-nav {
    position: relative;
    flex: none;
    width: 178px;
    border-right: 1px solid #2b2b2b;
    background-color: #191919;
}
.nv {
    display: flex;
    align-items: center;
    height: 24px;
    padding-left: 24px;
    color: #dcdcdc;
    white-space: nowrap;
}
.nv span {
    margin-left: 4px;
}
.nv .ic-folder {
    width: 12px;
    height: 10px;
}
.nv-num {
    letter-spacing: -.35px;
}
.ic-cloud, .ic-screen {
    width: 13px;
    height: 11px;
}
.nv-chev {
    width: 8px;
    height: 8px;
    margin: 0 8px 0 -16px;
    color: #888;
}
.ic-cloud + span, .ic-screen + span {
    margin-left: 3px;
}
.pin {
    width: 10px;
    height: 10px;
    position: absolute;
    left: 151px;
}
.nv-rule {
    height: 1px;
    margin: 12px 16px 11px 6px;
    background-color: #333;
}
.nv.sub {
    padding-left: 42px;
}
.nv.current {
    width: 163px;
    background-color: #2d2d2d;
}
.nv-up {
    position: absolute;
    left: 166px;
    top: 5px;
    border: 3px solid transparent;
    border-bottom: 5px solid #aaa;
    border-top: 0;
}
.nv-thumb {
    position: absolute;
    left: 168px;
    top: 171px;
    width: 3px;
    height: 60px;
    background-color: #777;
}
.ex-files {
    display: grid;
    flex: none;
    grid-template-columns: repeat(4, 79.3px);
    grid-auto-rows: 87px;
    gap: 1px 16px;
    align-content: start;
    width: 394px;
    padding: 4px 0 0 11px;
    border-right: 1px solid #2b2b2b;
}
.file {
    display: flex;
    flex-direction: column;
    align-items: center;
    border: 1px solid transparent;
    color: #d8d8d8;
}
.file span {
    flex: none;
    height: 18px;
    margin-top: -1px;
    line-height: 18px;
    white-space: nowrap;
}
.file.focused {
    border-color: #555;
    border-radius: 2px;
}
.thumb {
    flex: none;
    width: 68px;
    height: 69px;
    margin: 3px 4px 0 0;
    background: repeating-linear-gradient(45deg, #2c2c2c 0 2px, #a2a2a2 2px 4px);
    box-shadow: inset 0 0 3px 1px #111;
    border-radius: 3px;
}
.doc {
    width: 51px;
    height: 66px;
    margin-top: 5px;
}
.ex-side {
    display: flex;
    flex-direction: column;
    flex: none;
    width: 225px;
}
.ex-preview {
    display: flex;
    flex: none;
    align-items: center;
    justify-content: center;
    height: 165px;
    padding-bottom: 4px;
    background-color: #212121;
}
.ex-preview svg {
    width: 64px;
    height: 50px;
}
.ex-details {
    flex: 1;
    padding: 21px 0 0 16px;
    background-color: #1a1a1a;
}
.ex-count {
    font-size: 11.2px;
    font-weight: 600;
    color: #eee;
}
.ex-hint {
    height: 50px;
    margin-top: 11px;
    padding: 12px 0 0 29px;
    border: 1px solid #2c2c2c;
    border-radius: 4px;
    white-space: nowrap;
    overflow: hidden;
}
.remote-tab {
    position: absolute;
    left: 1422px;
    top: 715px;
    width: 24px;
    height: 40px;
    padding: 7px 0 0 5px;
    background-color: #fff;
    border-radius: 4px 0 0 0;
    clip-path: polygon(0 0, 100% 0, 100% 100%, 0 75%);
}
.remote-tab svg {
    width: 12px;
    height: 12px;
}
```
